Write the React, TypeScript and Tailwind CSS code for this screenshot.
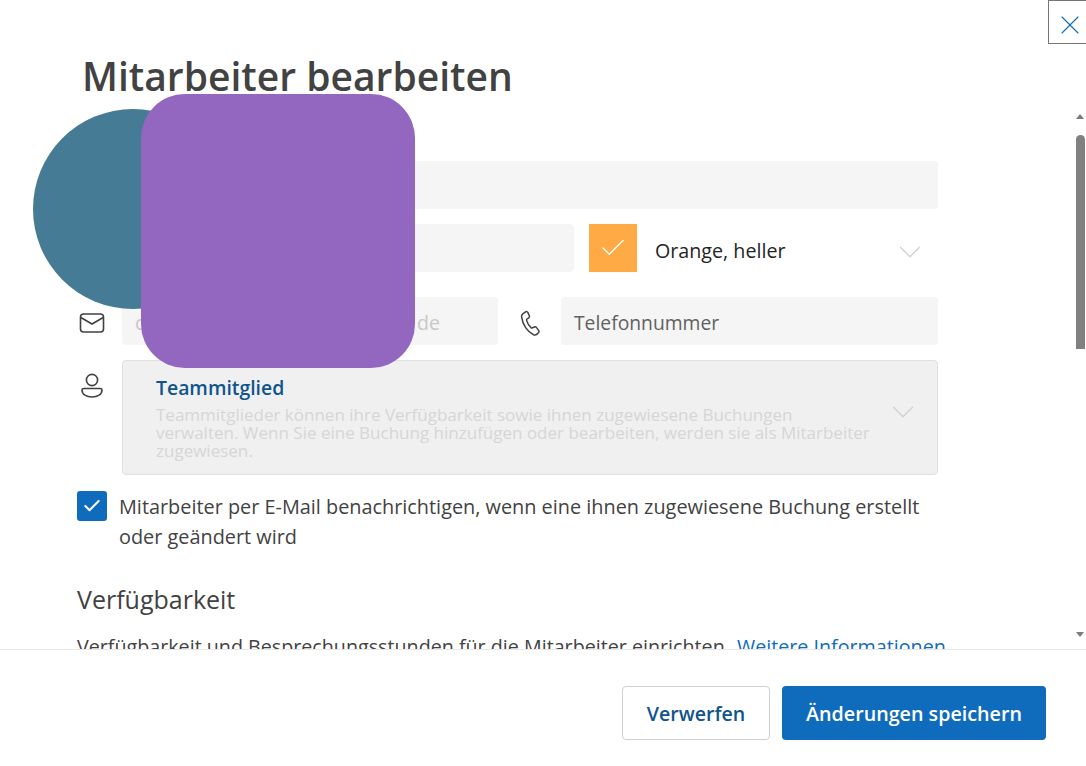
import { X, ChevronDown, Check } from "lucide-react";

const font = "font-['Open_Sans','Noto_Sans',sans-serif]";

function MailIcon() {
  return (
    <svg width="26" height="22" viewBox="0 0 26 22" fill="none" stroke="#424242" strokeWidth="1.6">
      <rect x="1.5" y="2" width="23" height="18" rx="3" />
      <path d="M1.8 5.5 13 12l11.2-6.5" />
    </svg>
  );
}

function PhoneIcon() {
  return (
    <svg width="22" height="26" viewBox="0 0 22 26" fill="none" stroke="#424242" strokeWidth="1.5">
      <path d="M3 3.6 5.6 1.8c.9-.5 1.8-.2 2.2.6l1.5 3.4c.3.8.1 1.5-.5 2L7 9c-.5.5-.5 1-.3 1.6.9 3 2.300 5.300 4.300 7 .5.400 1 .4 1.500.2l2-.8c.8-.3 1.500-.1 2 .6l2.200 3c.5.700.4 1.500-.2 2.100l-1.500 1.400c-1 .9-2.300 1.100-3.500.6C7.500 22 2.500 14.500 1.600 6.800 1.500 5.500 2 4.300 3 3.600Z" />
    </svg>
  );
}

function PersonIcon() {
  return (
    <svg width="24" height="26" viewBox="0 0 24 26" fill="none" stroke="#424242" strokeWidth="1.6">
      <circle cx="12" cy="7" r="5.600" />
      <path d="M3.500 15.500h17c.8 0 1.500.7 1.500 1.500 0 4.500-4.500 7-10 7S2 21.500 2 17c0-.8.7-1.500 1.500-1.500Z" />
    </svg>
  );
}

export default function App() {
  return (
    <div className={`relative flex flex-col w-[1086px] h-[766px] overflow-hidden bg-white ${font}`}>
      <button className="absolute top-0 right-0 w-[38px] h-[44px] flex items-center justify-center pl-[5px] pt-[6px] border border-[#767676] border-r-0 bg-white">
        <X size={36} strokeWidth={0.85} className="text-[#0f6cbd]" />
      </button>

      <div className="h-[110px] shrink-0 pl-[82px] pt-[49px]">
        <h1 className="text-[39px] leading-[54px] font-semibold text-[#424242]">Mitarbeiter bearbeiten</h1>
      </div>

      <div className="relative flex-1 overflow-hidden">
        <div className="pl-[77px] pr-[148px] pt-[51px]">
          <div className="flex flex-col">
            <div className="ml-[45px] h-[48px] rounded bg-[#f5f5f5]" />
            <div className="ml-[45px] mt-[15px] flex items-center h-[48px]">
              <div className="w-[452px] h-[48px] rounded bg-[#f5f5f5]" />
              <div className="ml-[15px] w-[48px] h-[48px] bg-[#ffaa44] flex items-center justify-center">
                <Check size={30} strokeWidth={1.1} className="text-white" />
              </div>
              <span className="ml-[18px] pt-[5px] text-[19.700px] text-[#242424]">Orange, heller</span>
              <ChevronDown size={38} strokeWidth={0.85} className="ml-auto mr-[9px] mt-[8px] text-[#d1d1d1]" />
            </div>
            <div className="mt-[25px] flex items-center h-[48px]">
              <div className="w-[45px] pl-[2px] mt-[4px]"><MailIcon /></div>
              <div className="w-[376px] h-[48px] rounded bg-[#f5f5f5] flex items-center pl-[13px] pr-[58px] pt-[4px] text-[19.500px] text-[#c8c8c8]">
                <span className="flex-1">c</span>
                <span>de</span>
              </div>
              <div className="w-[63px] flex justify-center pl-[3px] mt-[4px]"><PhoneIcon /></div>
              <div className="flex-1 h-[48px] rounded bg-[#f5f5f5] flex items-center px-[13px] pt-[4px] text-[19.300px] text-[#616161]">
                Telefonnummer
              </div>
            </div>
            <div className="mt-[15px] flex items-start">
              <div className="w-[45px] pt-[13px] pl-[3px]"><PersonIcon /></div>
              <div className="flex-1 h-[115px] rounded border border-[#e0e0e0] bg-[#f0f0f0] flex items-center pl-[33px] pr-[15px]">
                <div className="flex-1">
                  <div className="text-[19.400px] leading-[26px] font-semibold text-[#0f548c]">Teammitglied</div>
                  <div className="mt-[5px] text-[17px] leading-[18px] text-[#d6d6d6] whitespace-nowrap">
                    Teammitglieder können ihre Verfügbarkeit sowie ihnen zugewiesene Buchungen
                    <br />
                    verwalten. Wenn Sie eine Buchung hinzufügen oder bearbeiten, werden sie als Mitarbeiter
                    <br />
                    zugewiesen.
                  </div>
                </div>
                <ChevronDown size={38} strokeWidth={0.85} className="mt-[-12px] text-[#d1d1d1]" />
              </div>
            </div>
          </div>

          <div className="mt-[16px] flex items-start gap-[12px]">
            <div className="w-[30px] h-[30px] shrink-0 rounded-[3px] bg-[#0f6cbd] flex items-center justify-center">
              <Check size={20} strokeWidth={2.5} className="text-white" />
            </div>
            <p className="pt-[1px] text-[19.870px] leading-[30px] text-[#424242]">
              Mitarbeiter per E-Mail benachrichtigen, wenn eine ihnen zugewiesene Buchung erstellt oder geändert wird
            </p>
          </div>

          <h2 className="mt-[29px] text-[25px] leading-[36px] text-[#424242]">Verfügbarkeit</h2>
          <p className="mt-[15px] text-[19.700px] leading-[30px] text-[#424242] whitespace-nowrap">
            Verfügbarkeit und Besprechungsstunden für die Mitarbeiter einrichten.{" "}
            <span className="ml-[2px] text-[#0f6cbd]">Weitere Informationen</span>
          </p>
        </div>

        <div className="absolute top-0 right-[1px] bottom-0 w-[9px]">
          <div className="absolute top-[4px] left-0 w-0 h-0 border-x-[4.500px] border-x-transparent border-b-[5px] border-b-[#7a7a7a]" />
          <div className="absolute top-[25px] left-0 w-[9px] h-[214px] rounded-t-[5px] bg-[#808080]" />
          <div className="absolute top-[522px] left-0 w-0 h-0 border-x-[4.500px] border-x-transparent border-t-[5px] border-t-[#7a7a7a]" />
        </div>
      </div>

      <div className="h-[117px] shrink-0 border-t border-[#e8e8e8] flex justify-end items-start gap-[12px] pt-[36px] pr-[40px]">
        <button className="w-[148px] h-[54px] pt-[1px] rounded border border-[#d1d1d1] bg-white text-[19.600px] font-semibold text-[#0f548c]">Verwerfen</button>
        <button className="w-[264px] h-[54px] pt-[1px] rounded bg-[#0f6cbd] text-[19.700px] font-semibold text-white">Änderungen speichern</button>
      </div>

      {/* abgedeckte Bereiche */}
      <div className="absolute left-[33px] top-[109px] w-[200px] h-[200px] rounded-full bg-[#457b94]" />
      <div className="absolute left-[141px] top-[94px] w-[274px] h-[274px] rounded-[44px] bg-[#9366c0]" />
    </div>
  );
}
